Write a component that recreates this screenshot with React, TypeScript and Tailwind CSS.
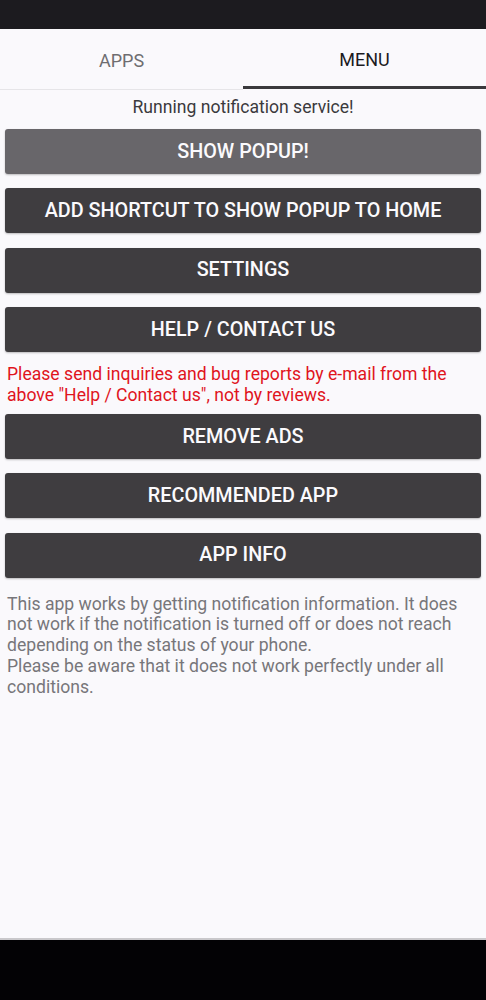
import React from "react";

const buttons1 = ["ADD SHORTCUT TO SHOW POPUP TO HOME", "SETTINGS", "HELP / CONTACT US"];
const buttons2 = ["REMOVE ADS", "RECOMMENDED APP", "APP INFO"];

function MenuButton({ label, light }: { label: string; light?: boolean }) {
  return (
    <button
      className={`h-[45px] w-full rounded-[3px] text-[19.8px] font-medium text-[#fbfafd] shadow-[0_1px_2px_rgba(0,0,0,0.25)] ${
        light ? "bg-[#68666a]" : "bg-[#3f3d40]"
      }`}
    >
      {label}
    </button>
  );
}

export default function App() {
  return (
    <div className="flex h-[1000px] w-[486px] flex-col bg-[#faf9fc]" style={{ fontFamily: "Roboto, 'Noto Sans', sans-serif" }}>
      <div className="h-[29px] bg-[#1c1b1f]" />

      {/* tabs */}
      <div className="flex h-[61px]">
        <div className="flex flex-1 flex-col">
          <div className="flex flex-1 items-center justify-center pt-[3px] text-[18px] text-[#6e6d70]">APPS</div>
          <div className="h-[1px] bg-[#e6e5e8]" />
        </div>
        <div className="flex flex-1 flex-col">
          <div className="flex flex-1 items-center justify-center pt-[3px] text-[18px] text-[#1c1b1f]">MENU</div>
          <div className="mb-[1px] h-[3px] bg-[#3a393c]" />
        </div>
      </div>

      <div className="flex flex-1 flex-col px-[5px]">
        <p className="pt-[7px] text-center text-[17.6px] leading-[20px] text-[#3b3a3d]">Running notification service!</p>
        <div className="mt-[12px] flex flex-col gap-[14.4px]">
          <MenuButton label="SHOW POPUP!" light />
          {buttons1.map((b) => (
            <MenuButton key={b} label={b} />
          ))}
        </div>
        <p className="mt-[12px] px-[2px] text-[17.6px] leading-[20.7px] text-[#e0141c]">
          Please send inquiries and bug reports by e-mail from the above "Help / Contact us", not by reviews.
        </p>
        <div className="mt-[8.4px] flex flex-col gap-[14.4px]">
          {buttons2.map((b) => (
            <MenuButton key={b} label={b} />
          ))}
        </div>
        <p className="mt-[16px] px-[2px] text-[17.6px] leading-[20.7px] text-[#77767a]">
          This app works by getting notification information. It does not work if the notification is turned off or does not reach depending on the status of your phone.
          <br />
          Please be aware that it does not work perfectly under all conditions.
        </p>
      </div>

      <div className="h-[2px] bg-[#c9c8cb]" />
      <div className="h-[60px] bg-[#030205]" />
    </div>
  );
}
